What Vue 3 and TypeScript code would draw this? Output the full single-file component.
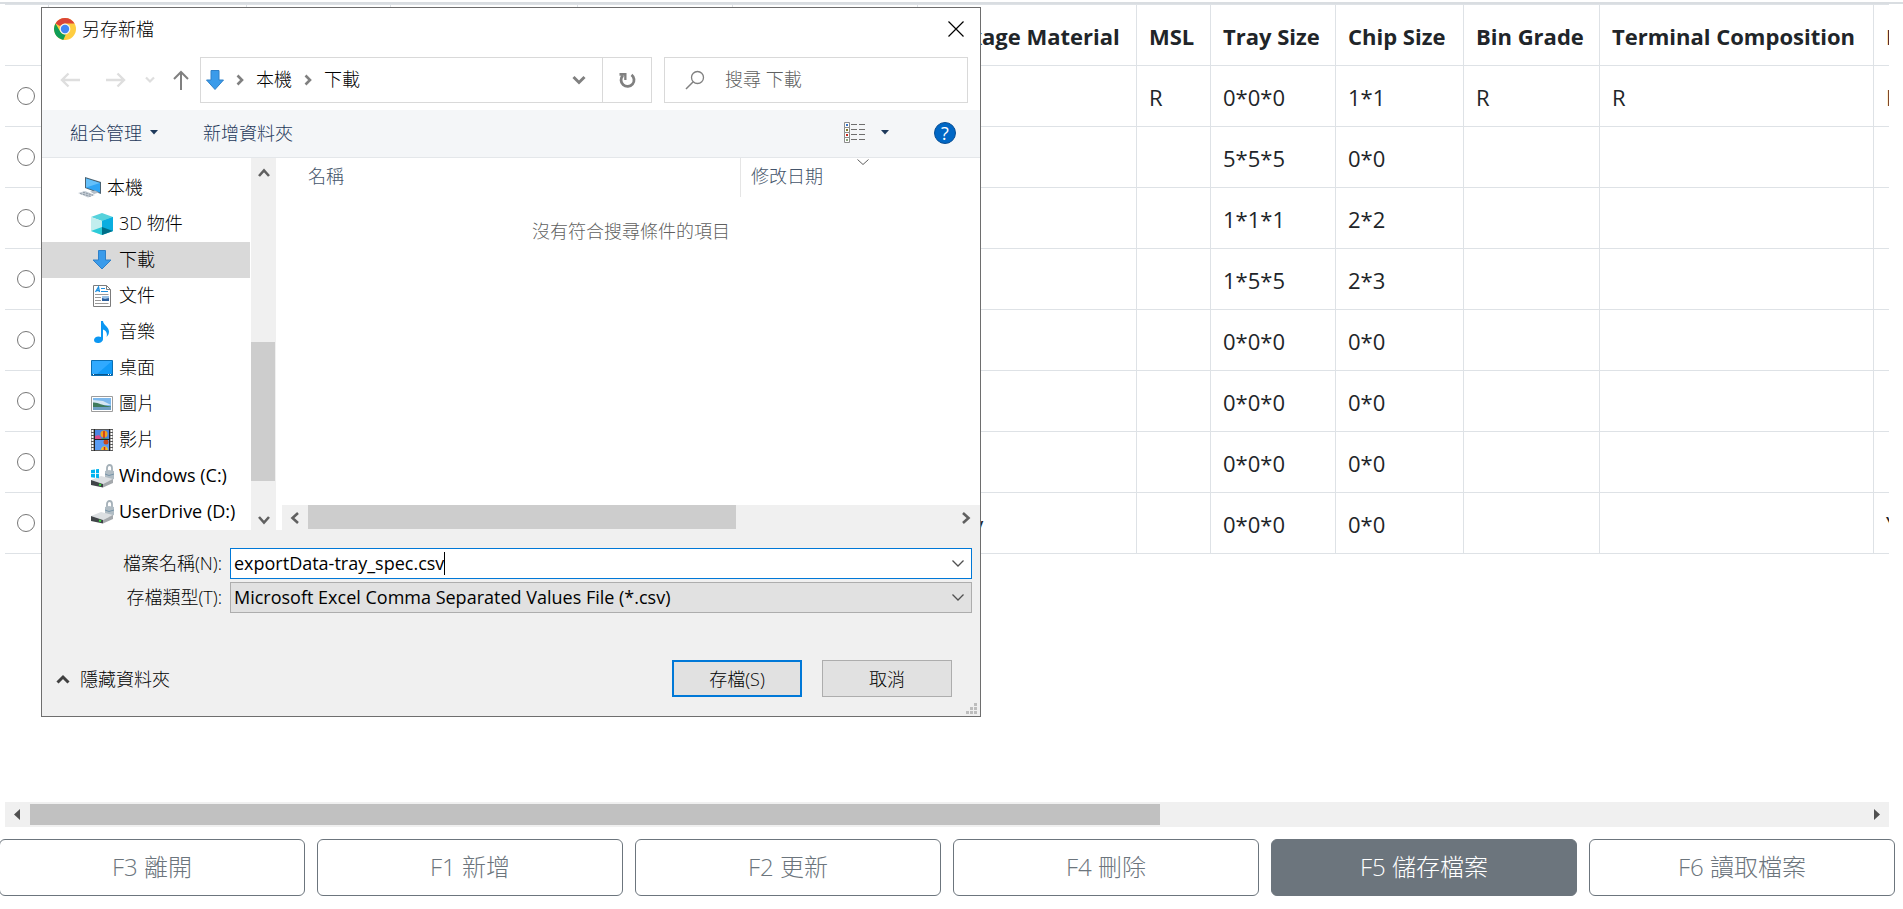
<script setup lang="ts">
import { ref } from 'vue'

interface Column { label: string; width: number }
interface Folder { label: string; icon: string; root?: boolean }
interface Action { key: string; label: string; active?: boolean }

const columns: Column[] = [
  { label: '', width: 44 },
  { label: '', width: 198 },
  { label: '', width: 144 },
  { label: '', width: 187 },
  { label: '', width: 155 },
  { label: '', width: 185 },
  { label: 'Package Material', width: 219 },
  { label: 'MSL', width: 74 },
  { label: 'Tray Size', width: 125 },
  { label: 'Chip Size', width: 128 },
  { label: 'Bin Grade', width: 136 },
  { label: 'Terminal Composition', width: 274 },
  { label: 'L', width: 180 },
]
const tableWidth = columns.reduce((sum, c) => sum + c.width, 0)

const rows: string[][] = [
  ['', '', '', '', '', '', 'R', '0*0*0', '1*1', 'R', 'R', 'R'],
  ['', '', '', '', '', '', '', '5*5*5', '0*0', '', '', ''],
  ['', '', '', '', '', '', '', '1*1*1', '2*2', '', '', ''],
  ['', '', '', '', '', '', '', '1*5*5', '2*3', '', '', ''],
  ['', '', '', '', '', '', '', '0*0*0', '0*0', '', '', ''],
  ['', '', '', '', '', '', '', '0*0*0', '0*0', '', '', ''],
  ['', '', '', '', '', '', '', '0*0*0', '0*0', '', '', ''],
  ['', '', '', '', '', 'Yyyty', '', '0*0*0', '0*0', '', '', 'Y'],
]

const folders: Folder[] = [
  { label: '本機', icon: 'pc', root: true },
  { label: '3D 物件', icon: 'cube' },
  { label: '下載', icon: 'download' },
  { label: '文件', icon: 'doc' },
  { label: '音樂', icon: 'music' },
  { label: '桌面', icon: 'desktop' },
  { label: '圖片', icon: 'picture' },
  { label: '影片', icon: 'video' },
  { label: 'Windows (C:)', icon: 'cdrive' },
  { label: 'UserDrive (D:)', icon: 'ddrive' },
]
const currentFolder = ref('下載')

const actions: Action[] = [
  { key: 'F3', label: '離開' },
  { key: 'F1', label: '新增' },
  { key: 'F2', label: '更新' },
  { key: 'F4', label: '刪除' },
  { key: 'F5', label: '儲存檔案', active: true },
  { key: 'F6', label: '讀取檔案' },
]

const selectedRow = ref<number | null>(null)
const fileName = ref('exportData-tray_spec.csv')
const search = ref('')
</script>

<template>
  <div class="page">
    <main class="grid-area">
      <div class="table-view">
        <table class="spec" :style="{ width: tableWidth + 'px' }">
          <colgroup>
            <col v-for="(c, i) in columns" :key="i" :style="{ width: c.width + 'px' }" />
          </colgroup>
          <thead>
            <tr><th v-for="(c, i) in columns" :key="i" scope="col">{{ c.label }}</th></tr>
          </thead>
          <tbody>
            <tr v-for="(r, i) in rows" :key="i">
              <td class="pick"><input v-model="selectedRow" type="radio" name="row" :value="i" :aria-label="`Row ${i + 1}`" /></td>
              <td v-for="(v, j) in r" :key="j">{{ v }}</td>
            </tr>
          </tbody>
        </table>
      </div>
    </main>

    <div class="page-scroll">
      <button type="button" class="page-arrow" aria-label="Scroll left">
        <svg width="25" height="25"><path d="M9 12.5 15 7v11z" fill="#505050" /></svg>
      </button>
      <div class="page-track"><div class="page-thumb"></div></div>
      <button type="button" class="page-arrow" aria-label="Scroll right">
        <svg width="25" height="25"><path d="M16 12.5 10 7v11z" fill="#505050" /></svg>
      </button>
    </div>

    <footer class="actions">
      <button v-for="a in actions" :key="a.key" type="button" class="action" :class="{ active: a.active }">{{ a.key }} {{ a.label }}</button>
    </footer>

    <section class="dialog" role="dialog" aria-labelledby="dialog-title">
      <header class="title-bar">
        <svg width="22" height="22" viewBox="0 0 22 22">
          <circle cx="11" cy="11" r="11" fill="#ffcd40" />
          <path d="M11 0a11 11 0 0 1 9.6 5.6H11a5.4 5.4 0 0 0-4.7 2.7L1.5 5.5A11 11 0 0 1 11 0z" fill="#db4437" />
          <path d="M1.5 5.5 6.3 13.700a5.400 5.400 0 0 0 5.500 2.600L9.300 21.900A11 11 0 0 1 1.500 5.500z" fill="#0f9d58" />
          <circle cx="11" cy="11" r="5.400" fill="#f4f4f4" />
          <circle cx="11" cy="11" r="4.200" fill="#4285f4" />
        </svg>
        <h1 id="dialog-title">另存新檔</h1>
        <button type="button" class="close" aria-label="關閉">
          <svg width="16" height="16" viewBox="0 0 16 16"><path d="M.5.5l15 15m0-15l-15 15" stroke="#000" stroke-width="1.200" /></svg>
        </button>
      </header>

      <div class="nav-bar">
        <div class="history">
          <button type="button" aria-label="上一頁">
            <svg width="20" height="16" viewBox="0 0 20 16"><path d="M20 8H2M8.500 1.500 2 8l6.500 6.500" fill="none" stroke="#dedede" stroke-width="2.400" /></svg>
          </button>
          <button type="button" aria-label="下一頁">
            <svg width="20" height="16" viewBox="0 0 20 16"><path d="M0 8h18M11.500 1.500 18 8l-6.500 6.500" fill="none" stroke="#dedede" stroke-width="2.400" /></svg>
          </button>
          <button type="button" aria-label="最近的位置">
            <svg width="10" height="8" viewBox="0 0 10 8"><path d="M1 1.500l4 4 4-4" fill="none" stroke="#dedede" stroke-width="2.200" /></svg>
          </button>
          <button type="button" aria-label="上一層">
            <svg width="16" height="20" viewBox="0 0 16 20"><path d="M8 20V2M1 9l7-7 7 7" fill="none" stroke="#808080" stroke-width="2" /></svg>
          </button>
        </div>
        <div class="address">
          <svg width="18" height="20" viewBox="0 0 18 20"><path d="M5 .5h8V10h4.500L9 19.500.5 10H5z" fill="#3a9bea" stroke="#2f80c8" /></svg>
          <svg class="sep" width="8" height="12" viewBox="0 0 8 12"><path d="M1.500 1.500 6 6l-4.500 4.500" fill="none" stroke="#808080" stroke-width="2.600" /></svg>
          <a href="#">本機</a>
          <svg class="sep" width="8" height="12" viewBox="0 0 8 12"><path d="M1.500 1.500 6 6l-4.500 4.500" fill="none" stroke="#808080" stroke-width="2.600" /></svg>
          <a href="#">下載</a>
          <button type="button" class="history-toggle" aria-label="先前的位置">
            <svg width="14" height="10" viewBox="0 0 14 10"><path d="M1.500 2 7 7.500 12.500 2" fill="none" stroke="#808080" stroke-width="3" /></svg>
          </button>
          <button type="button" class="refresh" aria-label="重新整理">
            <svg width="17" height="17" viewBox="0 0 17 17"><path d="M12.500 2.800a6.500 6.500 0 1 1-8.600.6" fill="none" stroke="#808080" stroke-width="2.800" /><path d="M.5 1H7.500V8H5.200V3.700H.5z" fill="#808080" /></svg>
          </button>
        </div>
        <label class="search">
          <svg width="20" height="20" viewBox="0 0 20 20"><circle cx="12.500" cy="7.500" r="6" fill="none" stroke="#808080" stroke-width="1.300" /><path d="M8.200 11.800 1 19" stroke="#808080" stroke-width="1.500" /></svg>
          <input v-model="search" type="text" placeholder="搜尋 下載" aria-label="搜尋 下載" />
        </label>
      </div>

      <div class="tool-bar">
        <button type="button" class="organize">組合管理
          <svg width="8" height="5" viewBox="0 0 8 5"><path d="M0 0h8L4 4.500z" fill="#1e395b" /></svg>
        </button>
        <button type="button" class="new-folder">新增資料夾</button>
        <button type="button" class="views" aria-label="變更檢視">
          <svg width="22" height="22" viewBox="0 0 22 22">
            <g fill="#fff" stroke="#8c8c8c"><path d="M.5.5h5v5h-5zM.5 5.500h5v5h-5zM.5 10.500h5v5h-5zM.5 15.500h5v5h-5z" /></g>
            <path d="M2 2h2v2H2z" fill="#3a78c8" /><path d="M2 7h2v2H2z" fill="#827a28" /><path d="M2 12h2v2H2z" fill="#c82a20" /><path d="M2 17h2v2H2z" fill="#8aa67c" />
            <path d="M7 2.500h6m2 0h6M7 7.500h6m2 0h6M7 12.500h6m2 0h6M7 17.500h6m2 0h6" stroke="#6e6e6e" />
          </svg>
          <svg width="8" height="5" viewBox="0 0 8 5"><path d="M0 0h8L4 4.500z" fill="#1e395b" /></svg>
        </button>
        <button type="button" class="help" aria-label="說明">?</button>
      </div>

      <div class="browser">
        <nav class="tree">
          <button v-for="f in folders" :key="f.label" type="button" class="folder" :class="{ root: f.root, current: f.label === currentFolder, drive: f.icon.endsWith('drive') }" @click="currentFolder = f.label">
            <svg width="24" height="24" viewBox="0 0 24 24">
              <g v-if="f.icon === 'pc'">
                <path d="M7 1 23 6v12L7 12z" fill="#4a6272" /><path d="M8 2.500 22 7v9.500L8 11.500z" fill="#2fa4f4" /><path d="M8 2.500 22 7 8 11.500z" fill="#64c0fa" />
                <path d="M12 15.500l5-1 4 2-5 1.500z" fill="#b4bec8" /><path d="M0 17l7-2 10 4-7 2.500z" fill="#c4ccd4" /><path d="M2 17.500l11 3M5 16.200l10 3" stroke="#8c98a4" stroke-dasharray="2 1" />
              </g>
              <g v-else-if="f.icon === 'cube'">
                <path d="M12 1 23 5 12 9 1 5z" fill="#56d2dc" /><path d="M1 5l11 4v14L1 19z" fill="#c2eeee" /><path d="M23 5 12 9v14l11-4z" fill="#00b4d8" /><path d="M12 9l11-4v14l-11-4z" fill="#0aaee0" /><path d="M1 19l11-4v8z" fill="#2ccbd8" /><path d="M12 15l11 4-11 4z" fill="#006e88" />
              </g>
              <path v-else-if="f.icon === 'download'" d="M8.500 2.500h7V12h5.500l-9 9-9-9h5.500z" fill="#3a9bea" stroke="#2f80c8" />
              <g v-else-if="f.icon === 'doc'">
                <path d="M3.500 1.500h13l4 4v17h-17z" fill="#fff" stroke="#7c7c7c" /><path d="M16.500 1.500v4h4" fill="none" stroke="#7c7c7c" />
                <path d="M5.500 8l3-5 1 5M6.500 6.500h3" stroke="#1d8fe0" fill="none" stroke-width="1.300" /><path d="M11 4.500h4M11 7.500h7" stroke="#1d8fe0" /><path d="M5 10.500h13.500M5 13.500h6M5 16.500h6M5 19.500h13.500" stroke="#9a9a9a" /><path d="M12 12h7v5h-7z" fill="#2c5f9c" /><path d="M12 12h7v2l-4 1-3-1z" fill="#9cc4e8" />
              </g>
              <path v-else-if="f.icon === 'music'" d="M11 1h2c.4 4 6 6 6 10.500 0 2.500-1 4-2.400 5.500 1-4-.6-6.500-3.600-7.500V19c0 2.500-2.500 4-5 4s-4-1.200-4-3 2-3.500 4.500-3.500c1 0 2 .2 2.500.6z" fill="#0c97f2" />
              <g v-else-if="f.icon === 'desktop'"><path d="M1.500 4.500h21v15h-21z" fill="#119bf8" stroke="#0a6fb4" /><path d="M2 5h20L7 18H2z" fill="#30aaff" /><path d="M2 18.500h20" stroke="#0a568c" /><path d="M3 18.500h1m14 0h1m1 0h1" stroke="#fff" /></g>
              <g v-else-if="f.icon === 'picture'"><path d="M1.500 4.500h21v15h-21z" fill="#fff" stroke="#9c9c9c" /><path d="M3 6h18v12H3z" fill="#7db8ec" /><path d="M3 8l10 1 8 4H3z" fill="#d6e6f4" /><path d="M3 10.500c5-.5 8 3 18 4V16H3z" fill="#3f7b5c" /><path d="M3 15h18v3H3z" fill="#6f9fc4" /></g>
              <g v-else-if="f.icon === 'video'">
                <path d="M1 1h22v22H1z" fill="#5a5a5a" /><path d="M2.500 2v20m19-20v20" stroke="#fff" stroke-width="2" stroke-dasharray="2 1" />
                <path d="M5 2h14v9H5z" fill="#4a86e4" /><path d="M5 12h14v10H5z" fill="#5a9cf4" />
                <circle cx="14" cy="6" r="3.500" fill="#f2a41c" /><path d="M14 3v7" stroke="#c8281c" stroke-width="1.500" /><path d="M5 8l4-1 3 4H5z" fill="#d84c8c" /><path d="M10 11l4-1 5 1z" fill="#3c9a48" />
                <circle cx="16" cy="14" r="2.500" fill="#c8481c" /><path d="M11 22c0-5 7-5 7 0z" fill="#f6bc28" /><path d="M14.500 19v3" stroke="#c8281c" stroke-width="1.500" />
                <path d="M4.500 1v22m15-22v22M5 11.500h14" stroke="#222" />
              </g>
              <g v-else>
                <path d="M17 8V4c0-4 5-4 5 0v4" fill="none" stroke="#a4b0b8" stroke-width="1.800" /><path d="M15 7l4-1 5 1v8l-5 2-4-2z" fill="#b0bcc4" /><path d="M15 10l4 1.500 5-1.500" stroke="#7894a8" fill="none" />
                <path d="M1 16 11 12l12 3-10 5z" fill="#dcdfe2" /><path d="M1 16l12 4v3.500L1 21z" fill="#404448" /><path d="M13 20l10-5v4l-10 4.500z" fill="#a4a8ac" /><path d="M9 20.500l2 .6" stroke="#3ce040" stroke-width="2" />
                <path v-if="f.icon === 'cdrive'" d="M1 6l4-.5v3.700H1zM6 5.300 9 5v4.200H6zM1 10h4v3.700L1 13.200zM6 10h3v4.200l-3-.4z" fill="#00b4f0" />
              </g>
            </svg>
            <span>{{ f.label }}</span>
          </button>
        </nav>
        <div class="vbar">
          <button type="button" aria-label="向上捲動"><svg width="12" height="10" viewBox="0 0 12 10"><path d="M1 8l5-5.500L11 8" fill="none" stroke="#606060" stroke-width="2.600" /></svg></button>
          <div class="vtrack"><div class="vthumb"></div></div>
          <button type="button" aria-label="向下捲動"><svg width="12" height="10" viewBox="0 0 12 10"><path d="M1 2l5 5.500L11 2" fill="none" stroke="#606060" stroke-width="2.600" /></svg></button>
        </div>
        <div class="files">
          <div class="file-head">
            <div class="col-name">名稱</div>
            <div class="col-date">修改日期
              <svg class="sort" width="12" height="7" viewBox="0 0 12 7"><path d="M.5.5l5.500 5 5.500-5" fill="none" stroke="#606060" /></svg>
            </div>
          </div>
          <p class="empty">沒有符合搜尋條件的項目</p>
          <div class="hbar">
            <button type="button" aria-label="向左捲動"><svg width="10" height="12" viewBox="0 0 10 12"><path d="M8 1 2.500 6 8 11" fill="none" stroke="#606060" stroke-width="2.600" /></svg></button>
            <div class="htrack"><div class="hthumb"></div></div>
            <button type="button" aria-label="向右捲動"><svg width="10" height="12" viewBox="0 0 10 12"><path d="M2 1l5.500 5L2 11" fill="none" stroke="#606060" stroke-width="2.600" /></svg></button>
          </div>
        </div>
      </div>

      <div class="fields">
        <label for="file-name">檔案名稱(N):</label>
        <div class="box name-box">
          <input id="file-name" v-model="fileName" type="text" spellcheck="false" />
          <span class="caret"></span>
          <svg class="drop" width="12" height="7" viewBox="0 0 12 7"><path d="M.5.5l5.500 5.500 5.500-5.500" fill="none" stroke="#505050" stroke-width="1.300" /></svg>
        </div>
        <label for="file-type">存檔類型(T):</label>
        <div class="box type-box">
          <select id="file-type"><option>Microsoft Excel Comma Separated Values File (*.csv)</option></select>
          <svg class="drop" width="12" height="7" viewBox="0 0 12 7"><path d="M.5.5l5.500 5.500 5.500-5.500" fill="none" stroke="#505050" stroke-width="1.300" /></svg>
        </div>
      </div>

      <div class="dialog-foot">
        <button type="button" class="hide-folders">
          <svg width="14" height="10" viewBox="0 0 14 10"><path d="M1.500 8.500 7 3l5.500 5.500" fill="none" stroke="#404040" stroke-width="3" /></svg>
          隱藏資料夾
        </button>
        <button type="button" class="push primary">存檔(S)</button>
        <button type="button" class="push">取消</button>
      </div>
      <svg class="grip" width="11" height="11" viewBox="0 0 11 11"><path d="M8 0h3v3H8zM4 4h3v3H4zM8 4h3v3H8zM0 8h3v3H0zM4 8h3v3H4zM8 8h3v3H8z" fill="#bdbdbd" /></svg>
    </section>
  </div>
</template>

<style>
html, body { margin: 0; background: #fff; }
</style>

<style scoped>
* { box-sizing: border-box; }
button, input, select { font: inherit; color: inherit; margin: 0; }
button { background: none; border: 0; padding: 0; display: flex; align-items: center; justify-content: center; }
svg { display: block; flex: none; }
.page {
  position: relative; display: flex; flex-direction: column; min-height: 100vh; padding-top: 2px; overflow: hidden;
  font-family: "Open Sans", "Noto Sans CJK TC", sans-serif; color: #212529;
}
.grid-area { flex: 1; border-top: 2px solid #d9dde1; }
.table-view { margin: 0 14px 0 5px; overflow: hidden; border-top: 1px solid #dee2e6; }
.spec { table-layout: fixed; border-collapse: separate; border-spacing: 0; font-size: 22px; line-height: 36px; }
.spec th, .spec td { height: 61px; padding: 2px 12px 0; text-align: left; border-right: 1px solid #dee2e6; border-bottom: 1px solid #dee2e6; white-space: nowrap; }
.spec th { font-weight: 700; }
.spec .pick { padding: 0; }
.pick input { display: block; width: 18px; height: 18px; margin: 0 12px; }

.page-scroll { display: flex; height: 25px; margin: 0 14px 12px 5px; background: #f0f0f0; }
.page-track { flex: 1; padding: 2px 0; }
.page-thumb { width: 61.6%; height: 21px; background: #c1c1c1; }
.actions { display: flex; gap: 12px; margin: 0 8px 13px -1px; }
.action { flex: 1; height: 57px; padding-bottom: 4px; border: 1px solid #6c757d; border-radius: 6px; font-size: 24px; font-weight: 300; color: #6c757d; }
.action.active { background: #6c757d; color: #fff; }

.dialog { position: absolute; left: 41px; top: 7px; width: 940px; border: 1px solid #6e6e6e; background: #f0f0f0; color: #000; font-size: 18px; line-height: 24px; font-weight: 300; }
.title-bar { display: flex; align-items: center; height: 44px; padding: 0 16px 2px 12px; gap: 6px; background: #fff; }
.title-bar h1 { flex: 1; margin: 0; font-size: 18px; font-weight: 300; }
.nav-bar { display: flex; height: 58px; padding: 5px 12px 7px 18px; background: #fff; }
.history { display: flex; align-items: center; width: 140px; gap: 24px; }
.history button:nth-child(2) { margin-left: 2px; }
.history button:nth-child(3) { margin: 0 -6px 0 -5px; }
.address { display: flex; align-items: center; flex: 1; height: 46px; padding-left: 5px; border: 1px solid #d9d9d9; }
.address .sep { margin: 0 12px; }
.address a { padding-bottom: 2px; color: inherit; text-decoration: none; }
.history-toggle { margin-left: auto; width: 46px; height: 44px; }
.refresh { width: 49px; height: 44px; border-left: 1px solid #d9d9d9; }
.search { display: flex; align-items: center; width: 304px; height: 46px; margin-left: 12px; padding-left: 20px; gap: 20px; border: 1px solid #d9d9d9; }
.search input { flex: 1; min-width: 0; border: 0; padding: 0 0 2px; outline: 0; background: none; }
.search input::placeholder { color: #606060; opacity: 1; }
.tool-bar { display: flex; align-items: center; height: 48px; padding: 0 24px 2px 28px; background: #f4f6f8; border-bottom: 1px solid #e4e7ea; color: #1e395b; }
.organize { gap: 8px; }
.new-folder { margin-left: 45px; }
.views { gap: 15px; margin-left: auto; }
.help { width: 22px; height: 22px; margin-left: 45px; border: 1px solid #0a4f94; border-radius: 50%; background: #0067c5; color: #fff; font-size: 18px; line-height: 20px; font-weight: 400; }

.browser { display: flex; background: #fff; }
.tree { width: 208px; padding-top: 12px; margin-right: 1px; }
.folder { width: 100%; height: 36px; justify-content: flex-start; gap: 5px; padding-left: 48px; white-space: nowrap; }
.folder.root { padding-left: 36px; }
.folder.current { background: #d9d9d9; }
.folder.drive { font-weight: 400; }
.folder span { padding-bottom: 2px; }
.vbar { display: flex; flex-direction: column; width: 25px; background: #f0f0f0; }
.vbar button { height: 25px; padding-top: 4px; }
.vtrack { flex: 1; padding-top: 159px; }
.vthumb { width: 24px; height: 139px; background: #cdcdcd; }
.files { display: flex; flex-direction: column; flex: 1; padding-left: 6px; }
.file-head { display: flex; height: 39px; padding-left: 26px; line-height: 36px; color: #44546a; }
.col-name { width: 433px; border-right: 1px solid #e5e5e5; }
.col-date { position: relative; flex: 1; padding-left: 10px; }
.sort { position: absolute; left: 116px; top: 1px; }
.empty { flex: 1; margin: 22px 0 0; text-align: center; color: #606060; }
.hbar { display: flex; height: 25px; background: #f0f0f0; }
.hbar button { width: 26px; }
.hbar button:last-child { width: 28px; }
.htrack { flex: 1; }
.hthumb { width: 66.4%; height: 24px; background: #cdcdcd; }

.fields { display: grid; grid-template-columns: 180px 1fr; column-gap: 8px; row-gap: 3px; padding: 18px 8px 0 0; align-items: center; }
.fields label { padding-bottom: 2px; text-align: right; }
.box { position: relative; display: flex; align-items: center; height: 31px; padding: 0 7px 0 3px; border: 1px solid #adadad; background: #e1e1e1; font-weight: 400; }
.name-box { border-color: #0078d7; background: #fff; }
.box input { field-sizing: content; border: 0; padding: 0 0 2px; outline: 0; background: none; }
.box select { flex: 1; appearance: none; border: 0; padding: 0 0 2px; outline: 0; background: none; }
.caret { width: 1px; height: 23px; background: #000; }
.drop { margin-left: auto; }
.dialog-foot { display: flex; align-items: center; gap: 20px; padding: 47px 28px 19px 14px; }
.hide-folders { gap: 10px; margin-right: auto; }
.push { width: 130px; height: 37px; border: 1px solid #adadad; background: #e1e1e1; }
.push.primary { border: 2px solid #0078d7; }
.grip { position: absolute; right: 3px; bottom: 2px; }
</style>
